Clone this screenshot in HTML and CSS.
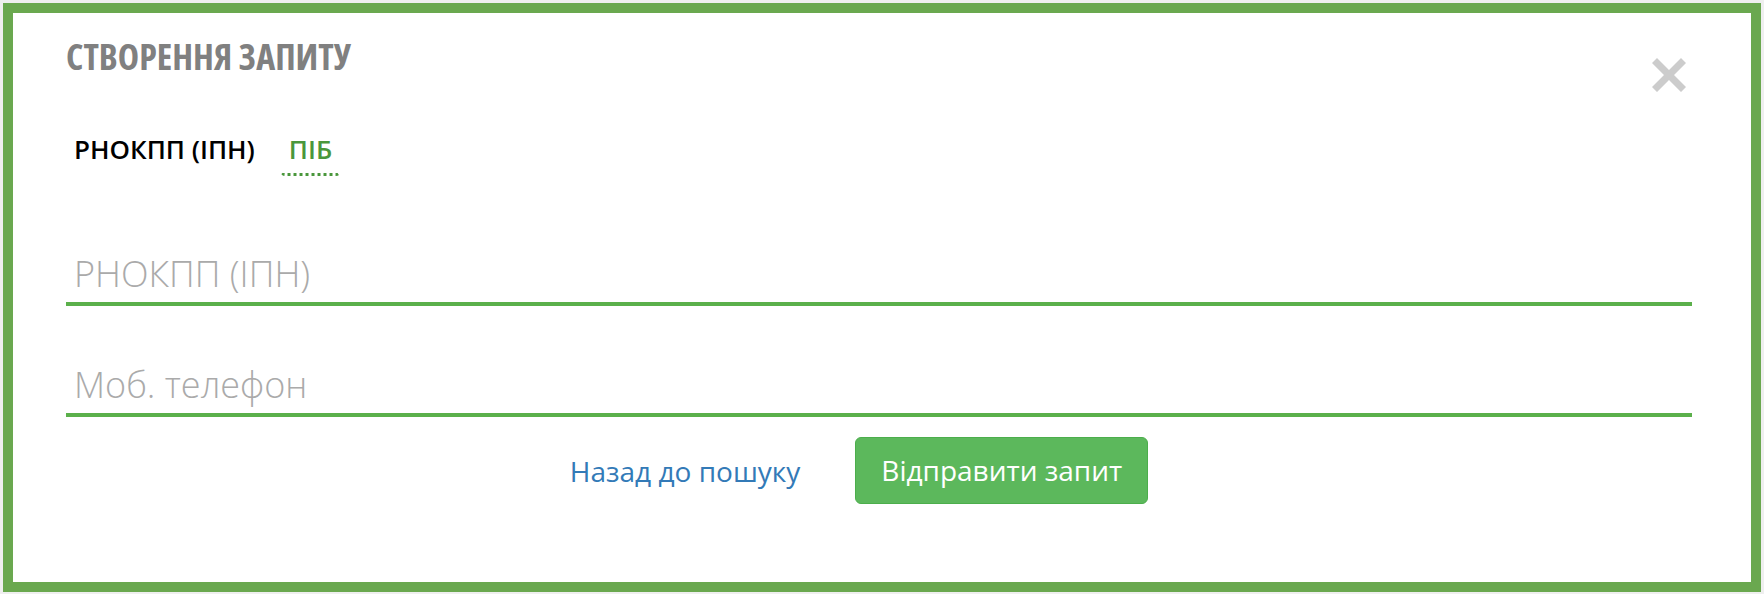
FILE: index.html
```html
<!DOCTYPE html>
<html lang="uk">
<head>
    <meta charset="UTF-8">
    <meta name="viewport" content="width=device-width, initial-scale=1.0">
    <title>Створення запиту</title>
    <link rel="stylesheet" href="styles.css">
</head>
<body>

<div class="request-modal">
    <div class="modal-header">
        <h2 class="modal-title">Створення запиту</h2>
        <button type="button" class="close-btn" aria-label="Закрити">
            <svg width="36" height="36" viewBox="0 0 36 36">
                <path d="M6 1 L18 13 L30 1 L35 6 L23 18 L35 30 L30 35 L18 23 L6 35 L1 30 L13 18 L1 6 Z" fill="#cccccc"/>
            </svg>
        </button>
    </div>

    <div class="tabs">
        <a href="#" class="tab">РНОКПП (ІПН)</a>
        <a href="#" class="tab active">ПІБ</a>
    </div>

    <form class="request-form">
        <div class="field">
            <input type="text" id="ipn" name="ipn" placeholder="РНОКПП (ІПН)">
        </div>
        <div class="field">
            <input type="text" id="phone" name="phone" placeholder="Моб. телефон">
        </div>
        <div class="form-actions">
            <a href="#" class="back-link">Назад до пошуку</a>
            <button type="button" class="submit-btn">Відправити запит</button>
        </div>
    </form>
</div>

</body>
</html>
```

FILE: styles.css
```css
body {
    margin: 0;
    padding: 3px 3px 2px 3px;
    background: #efefef;
    font-family: "Open Sans", Arial, sans-serif;
}
.request-modal {
    box-sizing: border-box;
    height: 589px;
    border: 10px solid #6aa84f;
    background: #ffffff;
    padding: 0 59px 0 53px;
}
.modal-header {
    display: flex;
    justify-content: space-between;
    align-items: flex-start;
}
.modal-title {
    margin: 0;
    padding-top: 24px;
    font-size: 36px;
    line-height: 40px;
    font-weight: 700;
    font-stretch: 75%;
    text-transform: uppercase;
    color: #808080;
}
.close-btn {
    margin: 44px 5px 0 0;
    padding: 0;
    border: none;
    background: none;
    line-height: 0;
    cursor: pointer;
}
.close-btn svg {
    display: block;
}
.tabs {
    display: flex;
    gap: 18px;
    margin-top: 39px;
}
.tab {
    padding: 0 8px 6px 8px;
    font-size: 26px;
    line-height: 35px;
    font-weight: 600;
    color: #000000;
    text-decoration: none;
    border-bottom: 3px dotted transparent;
    border-radius: 4px;
}
.tab.active {
    color: #4a973c;
    border-bottom-color: #4a973c;
}
.request-form {
    margin-top: 69px;
}
.field + .field {
    margin-top: 50px;
}
.field input {
    display: block;
    box-sizing: border-box;
    width: 100%;
    border: none;
    border-bottom: 4px solid #5bb04b;
    padding: 4px 8px;
    font-family: "Open Sans", Arial, sans-serif;
    font-size: 36px;
    line-height: 49px;
    font-weight: 300;
    color: #555;
    outline: none;
}
.field input::placeholder {
    color: #aaaaaa;
}
.form-actions {
    display: flex;
    justify-content: center;
    align-items: center;
    gap: 55px;
    margin-top: 20px;
}
.back-link {
    font-size: 28px;
    color: #337ab7;
    text-decoration: none;
}
.submit-btn {
    margin-right: 40px;
    padding: 13px 25px;
    border: 1px solid #4cae4c;
    border-radius: 6px;
    background: #5cb85c;
    color: #ffffff;
    font-family: "Open Sans", Arial, sans-serif;
    font-size: 28px;
    line-height: 39px;
    cursor: pointer;
}
```
